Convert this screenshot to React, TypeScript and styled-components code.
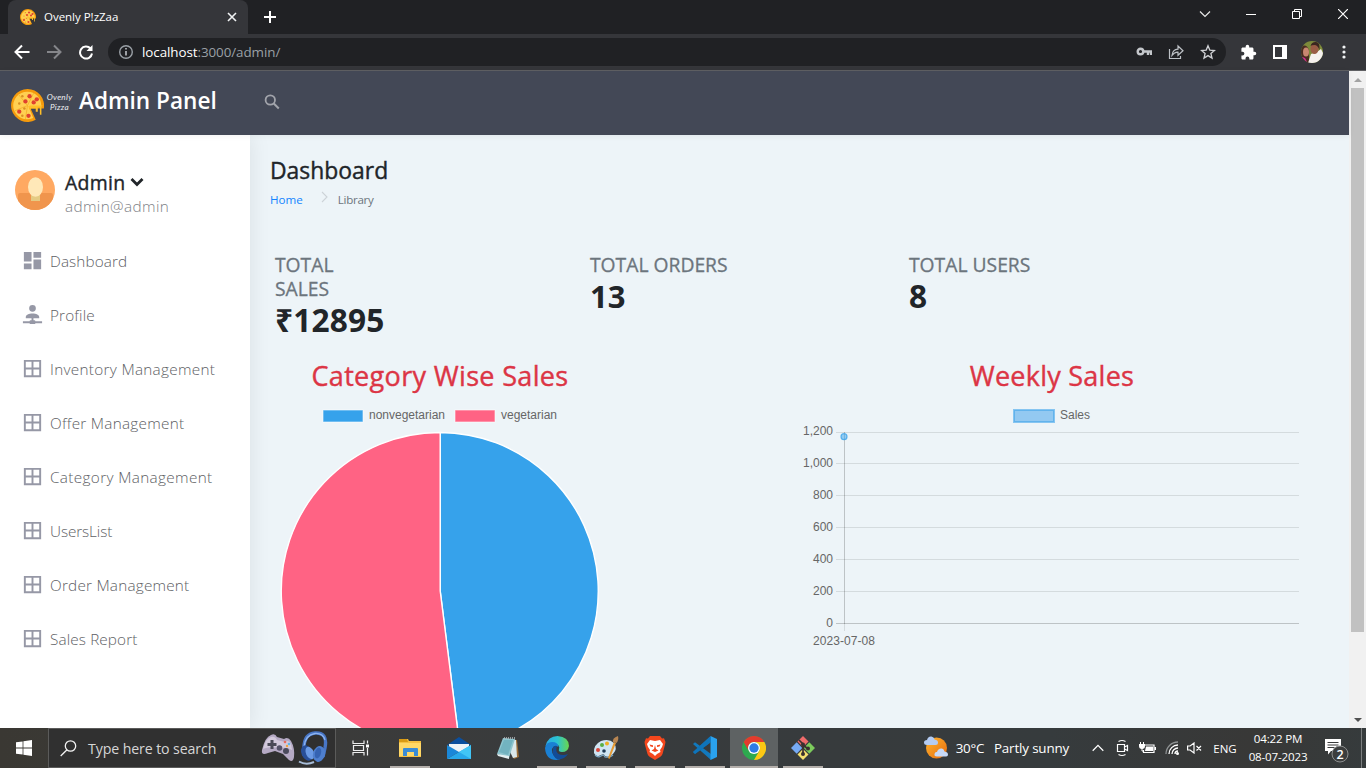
import React from 'react';
import styled, { createGlobalStyle, css } from 'styled-components';

const ui = `"Open Sans", "Noto Sans", sans-serif`;

const Global = createGlobalStyle`
  * { box-sizing: border-box; }
  body { margin: 0; overflow: hidden; font-family: ${ui}; }
  svg { display: block; flex: none; }
`;

const Screen = styled.div`
  width: 1366px;
  height: 768px;
  display: flex;
  flex-direction: column;
  overflow: hidden;
`;

/* text with explicit metrics; $bolden thickens the regular cut to a medium one */
const Text = styled.span<{
  $size: number; $weight?: number; $track?: number; $color?: string; $line?: number; $bolden?: number;
}>`
  font-size: ${p => p.$size}px;
  font-weight: ${p => p.$weight ?? 400};
  letter-spacing: ${p => p.$track ?? 0}px;
  color: ${p => p.$color ?? '#fff'};
  line-height: ${p => (p.$line ? `${p.$line}px` : 'normal')};
  -webkit-text-stroke: ${p => p.$bolden ?? 0}px currentColor;
  white-space: nowrap;
`;

/* ---------- browser ---------- */
const TabStrip = styled.div`
  height: 34px;
  flex: none;
  background: #202124;
  display: flex;
  padding-left: 8px;
`;
const Tab = styled.div`
  width: 240px;
  height: 34px;
  background: #35363a;
  border-radius: 8px 8px 0 0;
  display: flex;
  align-items: center;
  padding: 0 10px 0 12px;
  gap: 8px;
`;
const TabTitle = styled(Text)`
  flex: 1;
  margin-top: -1px;
`;
const NewTab = styled.div`
  width: 44px;
  display: flex;
  align-items: center;
  justify-content: center;
`;
const WindowButtons = styled.div`
  margin-left: auto;
  display: flex;
  height: 28px;
`;
const WindowButton = styled.div`
  width: 46px;
  display: flex;
  align-items: center;
  justify-content: center;
`;
const Toolbar = styled.div`
  height: 37px;
  flex: none;
  background: #35363a;
  border-bottom: 1px solid #5f6063;
  display: flex;
  align-items: center;
  padding-left: 10px;
`;
const NavButton = styled.div`
  width: 32px;
  display: flex;
  justify-content: center;
`;
const Address = styled.div`
  margin-left: 2px;
  width: 1118px;
  height: 28px;
  border-radius: 14px;
  background: #202124;
  display: flex;
  align-items: center;
  padding-left: 10px;
  padding-right: 2px;
  gap: 8px;
`;
const AddressText = styled.div`
  flex: 1;
  display: flex;
`;
const AddressIcon = styled.div`
  width: 32px;
  margin-left: -8px;
  display: flex;
  justify-content: center;
`;
const ToolbarRight = styled.div`
  display: flex;
  margin-left: 6px;
  align-items: center;
`;

/* ---------- page ---------- */
const Viewport = styled.div`
  height: 657px;
  flex: none;
  display: flex;
`;
const Page = styled.div`
  width: 1349px;
  display: flex;
  flex-direction: column;
  background: #edf4f8;
`;
const Header = styled.header`
  height: 64px;
  flex: none;
  background: #434856;
  display: flex;
  align-items: center;
  padding-left: 11px;
  position: relative;
  z-index: 2;
  box-shadow: 0 1px 6px rgba(0, 0, 0, 0.06);
`;
const Brand = styled.div`
  display: flex;
  align-items: center;
  width: 252px;
`;
const BrandIcon = styled.div`
  padding-top: 5px;
`;
const BrandTitle = styled(Text)`
  margin: -5px 0 0 4px;
`;
const Wordmark = styled.div`
  width: 31px;
  margin-top: -3px;
  display: flex;
  flex-direction: column;
  align-items: center;
  font: italic 400 8.2px/10px Lato, "Open Sans", sans-serif;
  letter-spacing: 0.3px;
  color: #eceef1;
`;
const SearchIcon = styled.div`
  margin-top: -2px;
`;
const Body = styled.div`
  flex: 1;
  min-height: 0;
  display: flex;
`;
const Sidebar = styled.aside`
  width: 250px;
  background: #fff;
  box-shadow: 1px 0 20px rgba(0, 0, 0, 0.08);
  padding-top: 35px;
`;
const User = styled.div`
  display: flex;
  padding-left: 15px;
  gap: 10px;
  height: 63px;
`;
const UserInfo = styled.div`
  display: flex;
  flex-direction: column;
`;
const UserName = styled.div`
  display: flex;
  align-items: center;
  gap: 5px;
  height: 24px;
`;
const MenuItem = styled.div`
  height: 54px;
  display: flex;
  align-items: center;
  padding-left: 21px;
  gap: 6px;
`;
const MenuText = styled(Text)`
  padding-top: 1px;
`;
const Main = styled.main`
  flex: 1;
  padding: 21px 0 0 20px;
  overflow: hidden;
  display: flex;
  flex-direction: column;
  & > * { flex: none; }
`;
const Title = styled(Text)`
  height: 30px;
`;
const Breadcrumb = styled.div`
  display: flex;
  height: 26px;
  align-items: center;
`;
const Stats = styled.div`
  display: grid;
  grid-template-columns: 315px 319px 1fr;
  margin: 41px 0 0 5px;
  height: 104px;
`;
const Stat = styled.div<{ $narrow?: boolean }>`
  width: ${p => (p.$narrow ? '100px' : 'auto')};
`;
const StatLabel = styled.div`
  font-size: 19.3px;
  line-height: 24px;
  -webkit-text-stroke: 0.3px currentColor;
  color: #6c757d;
`;
const Charts = styled.div`
  display: grid;
  grid-template-columns: 340px 514px;
  column-gap: 185px;
`;
const ChartCard = styled.section`
  display: flex;
  flex-direction: column;
  align-items: center;
`;
const ChartTitle = styled(Text)`
  height: 45px;
`;

const ScrollBar = styled.div`
  width: 17px;
  background: #f1f1f1;
  display: flex;
  flex-direction: column;
  align-items: center;
`;
const Thumb = styled.div`
  width: 13px;
  height: 544px;
  margin-bottom: auto;
  background: #c1c1c1;
`;
const ScrollArrow = styled.div`
  height: 17px;
  display: flex;
  align-items: center;
`;

/* ---------- taskbar ---------- */
const Taskbar = styled.footer`
  height: 40px;
  flex: none;
  display: flex;
  background: linear-gradient(90deg, #3a3833 0, #3b3b3a 330px, #383b3d 600px, #363b3d 1050px, #383837 1250px, #363b3c 1366px);
`;
const Start = styled.div`
  width: 48px;
  display: flex;
  align-items: center;
  justify-content: center;
`;
const SearchBox = styled.div`
  width: 288px;
  background: #303030;
  border: 1px solid #5b5b5a;
  display: flex;
  align-items: center;
  padding: 0 7px 0 11px;
`;
const SearchText = styled(Text)`
  margin-left: 11px;
  flex: 1;
`;
const SearchArt = styled.div`
  display: flex;
  align-items: center;
  gap: 3px;
`;
const AppSlot = styled.div<{ $run?: boolean; $active?: boolean }>`
  width: 49.15px;
  display: flex;
  flex-direction: column;
  align-items: center;
  justify-content: space-between;
  padding-top: 8px;
  ${p => p.$active && css`
    background: linear-gradient(90deg, transparent 0 1px, #5e6263 1px);
  `}
  &::after {
    content: '';
    height: 2px;
    width: ${p => (p.$active ? 48 : 40)}px;
    background: ${p => (p.$run || p.$active ? '#b4afab' : 'transparent')};
  }
`;
const Tray = styled.div`
  margin-left: auto;
  display: flex;
  align-items: center;
`;
const TrayCell = styled.div<{ $w: number }>`
  width: ${p => p.$w}px;
  display: flex;
  justify-content: center;
`;
const Clock = styled.div`
  width: 78px;
  margin-left: 3px;
  display: flex;
  flex-direction: column;
  align-items: center;
`;
const ShowDesktop = styled.div`
  width: 5px;
  height: 40px;
  border-left: 1px solid #7b7e7f;
`;

/* ---------- drawings ---------- */
const Pizza = ({ size }: { size: number }) => (
  <svg width={size} height={size} viewBox="0 0 32 32">
    <path d="M16 0A16 16 0 1 0 24 29.900L19 19L31.800 19A16 16 0 0 0 16 0Z" fill="#f59a0c" />
    <path d="M16 2.600A13.400 13.400 0 1 0 21.500 28L17 17H29.300A13.400 13.400 0 0 0 16 2.600Z" fill="#ffcf52" />
    <path d="M16 16L7 5M16 16L4 21M16 16L14 29M16 16L22 4" stroke="#f6b32d" strokeWidth=".9" />
    <path d="M17 17L19 21V19H24V22H26V18H28V25H29.500V17L31 16H18Z" fill="#ffbf28" />
    {[[11, 7], [18, 7], [25, 10], [8, 14], [14, 12], [8, 22], [13, 19], [17, 26], [22, 13], [11, 26]].map(([x, y], i) => (
      <circle key={i} cx={x} cy={y} r={i % 3 ? 2.1 : 1.2} fill={i % 3 ? '#e0412f' : '#d99025'} />
    ))}
  </svg>
);

const mdi: Record<string, string> = {
  dashboard: 'M13,3V9H21V3M13,21H21V11H13M3,21H11V15H3M3,13H11V3H3V13Z',
  profile:
    'M13,16V18H14A1,1 0 0,1 15,19H22V21H15A1,1 0 0,1 14,22H10A1,1 0 0,1 9,21H2V19H9A1,1 0 0,1 10,18H11V16H5V14.5C5,12.57 8.13,11 12,11C15.87,11 19,12.57 19,14.5V16H13M12,2A3.5,3.5 0 0,1 15.5,5.5A3.5,3.5 0 0,1 12,9A3.5,3.5 0 0,1 8.5,5.5A3.5,3.5 0 0,1 12,2Z',
  table: 'M19,11H13V5H19M19,19H13V13H19M11,11H5V5H11M11,19H5V13H11M3,21H21V3H3V21Z',
};
const menu: [string, string, number][] = [
  ['dashboard', 'Dashboard', 0.1],
  ['profile', 'Profile', 0.15],
  ['table', 'Inventory Management', 0.3],
  ['table', 'Offer Management', 0.27],
  ['table', 'Category Management', 0.35],
  ['table', 'UsersList', -0.1],
  ['table', 'Order Management', 0.22],
  ['table', 'Sales Report', 0.12],
];

const UserAvatar = () => (
  <svg width="40" height="40" viewBox="0 0 40 40">
    <defs><clipPath id="ua"><circle cx="20" cy="20" r="20" /></clipPath></defs>
    <g clipPath="url(#ua)">
      <rect width="40" height="40" fill="#ffa962" />
      <path d="M3 25q0-2 2-2h31q2 0 2 2v15H3Z" fill="#f0954d" />
      <rect x="16" y="22" width="9" height="9" fill="#e5cb83" />
      <ellipse cx="20.500" cy="17" rx="7.500" ry="9.800" fill="#ffe8b8" />
    </g>
  </svg>
);

const label = { fontFamily: '"Liberation Sans", Arial, sans-serif', fontSize: 12, fill: '#666' };

const PieChart = () => (
  <svg width="340" height="340" viewBox="270 402 340 340">
    <rect x="323" y="410" width="40" height="12" fill="#36a2eb" stroke="#fff" strokeOpacity=".6" />
    <text x="369" y="419" textLength="76" {...label}>nonvegetarian</text>
    <rect x="455" y="410" width="40" height="12" fill="#ff6384" stroke="#fff" strokeOpacity=".6" />
    <text x="501" y="419" textLength="56" {...label}>vegetarian</text>
    <g stroke="#fff" strokeWidth="1.400" strokeLinejoin="bevel">
      <path d="M440.200 591V432.500A158.500 158.500 0 0 1 460 748.200Z" fill="#36a2eb" />
      <path d="M440.200 591L460 748.200A158.500 158.500 0 1 1 440.200 432.500Z" fill="#ff6384" />
    </g>
  </svg>
);

const ticks: [string, number][] = [
  ['1,200', 432], ['1,000', 463], ['800', 495], ['600', 527], ['400', 559], ['200', 591], ['0', 623],
];
const LineChart = () => (
  <svg width="514" height="260" viewBox="795 402 514 260">
    <rect x="1013" y="409" width="42" height="14" fill="#86c5f1" />
    <rect x="1014.500" y="410.500" width="39" height="11" fill="#93c9f1" stroke="#62b3ec" />
    <text x="1060" y="419" textLength="30" {...label}>Sales</text>
    {ticks.map(([t, y]) => (
      <g key={t}>
        <rect x="836" y={y} width="463" height="1" fill="#000" opacity={t === '0' ? 0.2 : 0.1} />
        <text x="833" y={y + (t === '1,200' ? 3 : 4)} textAnchor="end" {...label}>{t}</text>
      </g>
    ))}
    <rect x="844" y="432" width="1" height="192" fill="#000" opacity=".2" />
    <rect x="844" y="624" width="1" height="7" fill="#000" opacity=".1" />
    <circle cx="844" cy="436.700" r="3" fill="#36a2eb" fillOpacity=".5" stroke="#36a2eb" strokeOpacity=".75" strokeWidth="1.200" />
    <text x="813" y="645" textLength="62" {...label}>2023-07-08</text>
  </svg>
);

const ProfilePhoto = () => (
  <svg width="22" height="22" viewBox="0 0 22 22">
    <defs><clipPath id="pp"><circle cx="11" cy="11" r="11" /></clipPath></defs>
    <g clipPath="url(#pp)">
      <rect width="22" height="22" fill="#7d8a3a" />
      <path d="M0 6q5-4 8 3v13H0Z" fill="#4a2c20" />
      <ellipse cx="5" cy="11" rx="3" ry="4.500" fill="#c98770" />
      <path d="M0 16q5-1 6 6H0Z" fill="#d42c90" />
      <path d="M7 22L10 13L16 11L20 8L22 12V22Z" fill="#f5f1ee" />
      <ellipse cx="13.500" cy="7.500" rx="4" ry="5.500" fill="#9a5c45" />
      <path d="M9.500 5q1-4 5-4t4 5v3q-2-5-5-5t-4 1" fill="#3a2620" />
    </g>
  </svg>
);

const Gamepad = () => (
  <svg width="34" height="30" viewBox="0 0 34 30">
    <path d="M1 17Q4 4 10 2Q14 0 16 4L23 6Q27 3 30 8Q34 15 33 24Q32 30 28 27L22 21L14 18L7 20Q0 23 1 17Z" fill="#b5a9c4" />
    <path d="M2 16Q5 5 10 4Q14 3 16 7L24 9Q28 6 30 11L31 17Q26 14 20 15L10 14Q4 15 2 16Z" fill="#d3c9dc" />
    <path d="M9.500 7h3v3h3v3h-3v3h-3v-3h-3v-3h3Z" fill="#4b4a58" />
    <circle cx="18.500" cy="15" r="2.800" fill="#56536a" /><circle cx="25" cy="18" r="3" fill="#4b4a5c" />
    <circle cx="24" cy="9" r="1.300" fill="#e86b5c" /><circle cx="28" cy="11" r="1.300" fill="#5db6e8" /><circle cx="26" cy="13" r="1.200" fill="#f0a53c" />
  </svg>
);
const Headphones = () => (
  <svg width="30" height="34" viewBox="0 0 30 34">
    <path d="M6 20Q5 3 17 2Q30 1 27 17L25 26" fill="none" stroke="#4876c6" strokeWidth="3.400" />
    <path d="M6 16Q7 4 17 2.500Q25 2 27 9" fill="none" stroke="#8db4f0" strokeWidth="1.300" />
    <ellipse cx="9" cy="22" rx="5.500" ry="8" transform="rotate(-25 9 22)" fill="#294f98" />
    <ellipse cx="12" cy="22" rx="4" ry="6.500" transform="rotate(-25 12 22)" fill="#6b9ae4" />
    <ellipse cx="21" cy="23" rx="6" ry="8" transform="rotate(15 21 23)" fill="#4e7fce" />
    <ellipse cx="20" cy="22" rx="3" ry="5.500" transform="rotate(15 20 22)" fill="#3563b2" />
    <path d="M16 31Q8 34.500 1 30.500" fill="none" stroke="#a8bdd8" strokeWidth="2" />
  </svg>
);

const Explorer = () => (
  <svg width="24" height="24" viewBox="0 0 24 24">
    <path d="M1 3h9l1 2h12v16H1Z" fill="#f5bf41" /><path d="M1 3h8l1 3H1Z" fill="#d99a14" /><path d="M1 7h22v13H1Z" fill="#ffd766" />
    <path d="M5 20v-7q0-1 1-1h13q1 0 1 1v7h-4v-4h-7v4Z" fill="#3a8bd4" />
  </svg>
);
const Mail = () => (
  <svg width="24" height="24" viewBox="0 0 24 24">
    <path d="M0 9L12 1L24 9Z" fill="#0b4f9e" /><path d="M2 8h20v8H2Z" fill="#eef3f7" />
    <path d="M0 9L12 16L0 23Z" fill="#1a87d8" /><path d="M24 9L0 23H24Z" fill="#28a8ea" /><path d="M24 9L12 16L24 23Z" fill="#41c5f5" />
  </svg>
);
const Notepad = () => (
  <svg width="24" height="24" viewBox="0 0 24 24">
    <path d="M8 3L21 4L23 21L18 23Z" fill="#9a6c36" /><path d="M8 3L20 4L21 21L17 22Z" fill="#dbe8ea" />
    <path d="M7 2L19 3L13 22L1 18Z" fill="#8ec5cf" /><path d="M8 4L17 4L12 19L3 16Z" fill="#5fa7b5" opacity=".6" /><path d="M1 18L13 20V23L2 20Z" fill="#e4f0f2" />
    <path d="M8 2h11" stroke="#b5b9bc" strokeWidth="1.500" strokeDasharray="1 1" />
  </svg>
);
const Edge = () => (
  <svg width="24" height="24" viewBox="0 0 24 24">
    <defs>
      <linearGradient id="e1" x1="0" x2="1"><stop offset="0" stopColor="#2aa9e6" /><stop offset=".5" stopColor="#2bc3d2" /><stop offset="1" stopColor="#6bd64b" /></linearGradient>
    </defs>
    <path d="M.5 10Q3 0 12.500 0Q24 1 24 10Q23 16 17 16Q13 16 14 13Q15 10 12 8.500Q6 5 .5 10Z" fill="url(#e1)" />
    <path d="M0 12Q1 6 7 6Q13 6 13.500 11Q9 8 7 13Q6 20 15 23.600Q1 26 0 12Z" fill="#1a80d4" />
    <path d="M8 12Q6 20 13 23.700Q20 23 23 18Q18 20 13.500 18Q10 15 12 10Q9 9 8 12Z" fill="#124c96" />
  </svg>
);
const Paint = () => (
  <svg width="26" height="24" viewBox="0 0 26 24">
    <path d="M1 17Q0 9 8 5Q16 2 21 7Q25 13 20 18Q16 22 12 20Q11 17 8 19Q3 22 1 17Z" fill="#cfe4f2" />
    <path d="M2 19Q5 22 8 20Q11 18 12 21Q17 22 20 19" fill="none" stroke="#7fa9c6" strokeWidth="1.200" />
    <circle cx="5" cy="14" r="2" fill="#d8453b" /><circle cx="9" cy="9" r="2" fill="#58ae45" /><circle cx="14" cy="7.500" r="2" fill="#f0ae22" /><circle cx="11" cy="15" r="1.800" fill="#1f3a55" />
    <path d="M15 22L21 6L23 7L16.500 23Z" fill="#e59a35" /><path d="M20 6Q19 2 25 0Q26 4 23.500 7Z" fill="#b78552" />
  </svg>
);
const Brave = () => (
  <svg width="22" height="24" viewBox="0 0 22 24">
    <path d="M6 0h10l2 2.500 2-.3L21.500 6l-.6 3L18.500 18q-.8 2-2.500 3L11 24 6 21q-1.800-1-2.500-3L1 9 .5 6 2 2.200l2 .3Z" fill="#f4471d" />
    <path d="M6 4l5 1 5-1 3 4-1 3-2 3 .5 2L13 18l-2 2-2-2-3.500-2 .5-2-2-3-1-3Z" fill="#fff" />
    <path d="M5.500 8.500l3.500.7v1.800L6.500 10.500ZM16.500 8.500L13 9.200v1.800l2.500-.5ZM11 9l1 4 2.500 1.500-3.500 1.500-3.500-1.500L10 13Z" fill="#f4471d" />
  </svg>
);
const VsCode = () => (
  <svg width="24" height="24" viewBox="0 0 24 24">
    <path d="M0 8L2 6.300L18 18V24Z" fill="#1279bd" /><path d="M0 16L2 18L18 6V0Z" fill="#0a69ab" />
    <path d="M17.500 0L24 3V21L17.500 24Z" fill="#2aa2ee" /><path d="M0 16L17.500 0V6.500L2 18Z" fill="#0f74ba" />
  </svg>
);
const Chrome = () => (
  <svg width="24" height="24" viewBox="0 0 24 24">
    <circle cx="12" cy="12" r="12" fill="#2da94f" />
    <path d="M1.600 6A12 12 0 0 1 22.400 6H12A6 6 0 0 0 6.800 15Z" fill="#e33b2e" />
    <path d="M22.400 6A12 12 0 0 1 12 24L17.200 15A6 6 0 0 0 12 6Z" fill="#fdc714" />
    <circle cx="12" cy="12" r="6" fill="#fff" /><circle cx="12" cy="12" r="4.700" fill="#2c7be5" />
  </svg>
);
const Git = () => (
  <svg width="24" height="24" viewBox="0 0 24 24">
    <path d="M12 0L17.500 5.500L12 11L6.500 5.500Z" fill="#ef6b6b" /><path d="M5.700 6.300L11.200 12L5.700 17.700L0 12Z" fill="#76aaf5" />
    <path d="M18.300 6.300L24 12L18.300 17.700L12.800 12Z" fill="#7ccb5c" /><path d="M12 13L17.500 18.500L12 24L6.500 18.500Z" fill="#f5df6f" />
    <path d="M8 4L12 8V18M12 9L17 13" stroke="#3a3030" strokeWidth="1.700" fill="none" />
    <circle cx="12" cy="8.500" r="2" fill="#3a3030" /><circle cx="12" cy="18" r="2" fill="#3a3030" /><circle cx="17" cy="12.500" r="2" fill="#3a3030" />
  </svg>
);
const TaskView = () => (
  <svg width="18" height="24" viewBox="0 0 18 24" fill="none" stroke="#eee" strokeWidth="1.200">
    <path d="M1 4.500v3h11v-3M1 19.500v-3h11v3M1.500 9.500h10v5h-10ZM15.500 4.500v3M15.500 12v7.500" /><path d="M14 8.500h3v3h-3Z" fill="#fff" stroke="none" />
  </svg>
);
const Weather = () => (
  <svg width="24" height="24" viewBox="0 0 24 24">
    <defs><linearGradient id="sun" x2="1" y2="1"><stop stopColor="#ffb52f" /><stop offset="1" stopColor="#e66b0d" /></linearGradient></defs>
    <circle cx="12.500" cy="12" r="10.500" fill="url(#sun)" />
    <path d="M3 9Q0 9 0 6.500T3 4Q4 0 7.500.5Q10 1 10.500 3.500Q14 4 14 6.500T11.500 9Z" fill="#b4ccf3" />
    <path d="M13 20.500Q10 20.500 10.500 18T13 16Q14 12 18 12.500Q20 13 20.500 15.500Q24 16 24 18.500T21.500 20.500Z" fill="#c7d9f7" />
  </svg>
);

const s = (stroke: string, w = 1) => ({ fill: 'none', stroke, strokeWidth: w });

export default function App() {
  return (
    <>
      <Global />
      <Screen>
        <TabStrip>
          <Tab>
            <Pizza size={16} />
            <TabTitle $size={11.5} $track={-0.02}>Ovenly P!zZaa</TabTitle>
            <svg width="12" height="12" viewBox="0 0 12 12"><path d="M2 2l8 8M10 2l-8 8" {...s('#f1f3f4', 1.6)} /></svg>
          </Tab>
          <NewTab><svg width="14" height="14" viewBox="0 0 14 14"><path d="M7 1v12M1 7h12" {...s('#fff', 2)} /></svg></NewTab>
          <WindowButtons>
            <WindowButton><svg width="12" height="12" viewBox="0 0 12 12"><path d="M1 3.500l5 5 5-5" {...s('#e8e8e8', 1.2)} /></svg></WindowButton>
            <WindowButton><svg width="10" height="10" viewBox="0 0 10 10"><path d="M0 5.500h10" {...s('#fff')} /></svg></WindowButton>
            <WindowButton><svg width="10" height="10" viewBox="0 0 10 10"><path d="M.5 2.500h7v7h-7ZM2.500 2.500v-2h7v7h-2" {...s('#fff')} /></svg></WindowButton>
            <WindowButton><svg width="10" height="10" viewBox="0 0 10 10"><path d="M0 0l10 10M10 0L0 10" {...s('#fff', 1.2)} /></svg></WindowButton>
          </WindowButtons>
        </TabStrip>
        <Toolbar>
          <NavButton><svg width="32" height="16" viewBox="4 0 32 16"><path d="M23.500 8H10M16 1.500L9.500 8l6.500 6.500" {...s('#fff', 2)} /></svg></NavButton>
          <NavButton><svg width="32" height="16" viewBox="4 0 32 16"><path d="M9 8h13.500M16 1.500L22.500 8L16 14.500" {...s('#85868a', 2)} /></svg></NavButton>
          <NavButton><svg width="32" height="16" viewBox="4 0 32 16"><path d="M20.500 4.500A6 6 0 1 0 22 9.500" {...s('#fff', 2)} /><path d="M22.500 1v6h-6Z" fill="#fff" /></svg></NavButton>
          <Address>
            <svg width="16" height="16" viewBox="0 0 16 16"><circle cx="8" cy="8" r="6.300" {...s('#9aa0a6', 1.4)} /><path d="M8 7v4.500M8 4v1.600" {...s('#bdc1c6', 1.6)} /></svg>
            <AddressText>
              <Text $size={13.4} $track={-0.07}>localhost</Text>
              <Text $size={13.4} $track={-0.07} $color="#9aa0a6">:3000/admin/</Text>
            </AddressText>
            <AddressIcon><svg width="16" height="16" viewBox="0 0 16 16"><circle cx="4.500" cy="7.500" r="2.800" {...s('#c4c7cb', 2.4)} /><path d="M8 7.500h7v3.500M12 8v3" {...s('#c4c7cb', 2.4)} /></svg></AddressIcon>
            <AddressIcon><svg width="16" height="16" viewBox="0 0 16 16"><path d="M1.500 5v9.500h11V12" {...s('#bdc1c6', 1.2)} /><path d="M4 11.500Q4.500 5.500 10 5.200V2l5 4.700-5 4.600V8.200Q6.500 8 4 11.500Z" {...s('#bdc1c6', 1.2)} /></svg></AddressIcon>
            <AddressIcon><svg width="16" height="16" viewBox="0 0 16 16"><path d="M8 1.800l1.800 4.300 4.700.4-3.600 3 1.100 4.600L8 11.600l-4 2.500 1.100-4.600-3.600-3 4.700-.4Z" {...s('#d0d2d5', 1.3)} /></svg></AddressIcon>
          </Address>
          <ToolbarRight>
            <NavButton><svg width="17" height="17" viewBox="0 0 24 24"><path d="M20.500 11H19V7c0-1.100-.9-2-2-2h-4V3.500a2.500 2.500 0 0 0-5 0V5H4c-1.100 0-2 .9-2 2v3.800h1.500a2.700 2.700 0 0 1 0 5.400H2V20c0 1.100.9 2 2 2h3.800v-1.500a2.700 2.700 0 0 1 5.400 0V22H17c1.100 0 2-.9 2-2v-4h1.500a2.500 2.500 0 0 0 0-5Z" fill="#fff" /></svg></NavButton>
            <NavButton><svg width="14" height="14" viewBox="0 0 14 14"><path d="M0 0h14v14H0ZM2 2v10h7V2Z" fill="#fff" fillRule="evenodd" /></svg></NavButton>
            <NavButton><ProfilePhoto /></NavButton>
            <NavButton><svg width="4" height="14" viewBox="0 0 4 14" fill="#f1f3f4"><circle cx="2" cy="2" r="1.600" /><circle cx="2" cy="7" r="1.600" /><circle cx="2" cy="12" r="1.600" /></svg></NavButton>
          </ToolbarRight>
        </Toolbar>

        <Viewport>
          <Page>
            <Header>
              <Brand>
                <BrandIcon><Pizza size={33} /></BrandIcon>
                <Wordmark><span>Ovenly</span><span>Pizza</span></Wordmark>
                <BrandTitle $size={22.6} $weight={600}>Admin Panel</BrandTitle>
              </Brand>
              <SearchIcon>
                <svg width="18" height="18" viewBox="0 0 18 18"><circle cx="7.300" cy="7" r="4.700" {...s('#a2a4ab', 1.8)} /><path d="M10.800 10.500l5 5" {...s('#a2a4ab', 2)} /></svg>
              </SearchIcon>
            </Header>
            <Body>
              <Sidebar>
                <User>
                  <UserAvatar />
                  <UserInfo>
                    <UserName>
                      <Text $size={19.4} $track={0.3} $bolden={0.4} $color="#212529">Admin</Text>
                      <svg width="14" height="10" viewBox="0 0 14 10"><path d="M1.500 2l5.500 5.500L12.500 2" {...s('#212529', 2.8)} /></svg>
                    </UserName>
                    <Text $size={15.3} $weight={300} $track={0.38} $color="#808286" $line={24}>admin@admin</Text>
                  </UserInfo>
                </User>
                {menu.map(([icon, text, track]) => (
                  <MenuItem key={text}>
                    <svg width="23" height="23" viewBox="0 0 24 24"><path d={mdi[icon]} fill="#9698a6" /></svg>
                    <MenuText $size={15.3} $weight={300} $track={track} $color="#606165">{text}</MenuText>
                  </MenuItem>
                ))}
              </Sidebar>
              <Main>
                <Title $size={22.9} $bolden={0.4} $color="#212529" $line={30}>Dashboard</Title>
                <Breadcrumb>
                  <Text $size={11.6} $color="#1384ff">Home</Text>
                  <svg width="35" height="16" viewBox="0 0 35 16"><path d="M19 1l5 5-5 5" {...s('#cdd3d8', 1.1)} /></svg>
                  <Text $size={11.6} $track={-0.3} $color="#6c757d">Library</Text>
                </Breadcrumb>
                <Stats>
                  <Stat $narrow>
                    <StatLabel>TOTAL SALES</StatLabel>
                    <Text $size={31.6} $weight={700} $track={0.2} $color="#212529" $line={38}>₹12895</Text>
                  </Stat>
                  <Stat>
                    <StatLabel>TOTAL ORDERS</StatLabel>
                    <Text $size={31} $weight={700} $color="#212529" $line={38}>13</Text>
                  </Stat>
                  <Stat>
                    <StatLabel>TOTAL USERS</StatLabel>
                    <Text $size={31.6} $weight={700} $color="#212529" $line={38}>8</Text>
                  </Stat>
                </Stats>
                <Charts>
                  <ChartCard>
                    <ChartTitle $size={27} $track={0.33} $bolden={0.4} $color="#dc3545" $line={38}>Category Wise Sales</ChartTitle>
                    <PieChart />
                  </ChartCard>
                  <ChartCard>
                    <ChartTitle $size={27} $track={0.25} $bolden={0.4} $color="#dc3545" $line={38}>Weekly Sales</ChartTitle>
                    <LineChart />
                  </ChartCard>
                </Charts>
              </Main>
            </Body>
          </Page>
          <ScrollBar>
            <ScrollArrow><svg width="8" height="4" viewBox="0 0 8 4"><path d="M4 0l4 4H0Z" fill="#a3a3a3" /></svg></ScrollArrow>
            <Thumb />
            <ScrollArrow><svg width="8" height="4" viewBox="0 0 8 4"><path d="M0 0h8L4 4Z" fill="#505050" /></svg></ScrollArrow>
          </ScrollBar>
        </Viewport>

        <Taskbar>
          <Start><svg width="16" height="16" viewBox="0 0 16 16"><path d="M0 2.300L6.600 1.400V7.600H0ZM7.400 1.300L16 0V7.600H7.400ZM0 8.400H6.600V14.600L0 13.700ZM7.400 8.400H16V16L7.400 14.700Z" fill="#fff" /></svg></Start>
          <SearchBox>
            <svg width="17" height="17" viewBox="0 0 17 17"><circle cx="10.500" cy="6" r="5.200" {...s('#f3f3f3', 1.3)} /><path d="M7 9.800L.7 16" {...s('#f3f3f3', 1.3)} /></svg>
            <SearchText $size={14.2} $track={-0.12} $color="#d6d6d6">Type here to search</SearchText>
            <SearchArt>
              <Gamepad />
              <Headphones />
            </SearchArt>
          </SearchBox>
          <AppSlot><TaskView /></AppSlot>
          <AppSlot $run><Explorer /></AppSlot>
          <AppSlot><Mail /></AppSlot>
          <AppSlot><Notepad /></AppSlot>
          <AppSlot $run><Edge /></AppSlot>
          <AppSlot $run><Paint /></AppSlot>
          <AppSlot $run><Brave /></AppSlot>
          <AppSlot $run><VsCode /></AppSlot>
          <AppSlot $active><Chrome /></AppSlot>
          <AppSlot $run><Git /></AppSlot>
          <Tray>
            <TrayCell $w={37}><Weather /></TrayCell>
            <TrayCell $w={32}><Text $size={13.4} $track={-0.2}>30°C</Text></TrayCell>
            <TrayCell $w={91}><Text $size={13.4} $track={-0.15}>Partly sunny</Text></TrayCell>
            <TrayCell $w={42}><svg width="12" height="8" viewBox="0 0 12 8"><path d="M.7 6.700L6 1.400l5.300 5.300" {...s('#fff', 1.3)} /></svg></TrayCell>
            <TrayCell $w={6}><svg width="14" height="18" viewBox="0 0 14 18"><path d="M2.500 5.500h7v7h-7ZM9.500 8l3-1.500v5L9.500 10M3.500 2.500q3.500-2 7 0M3.500 15.500q3.500 2 7 0" {...s('#fff', 1.2)} /></svg></TrayCell>
            <TrayCell $w={44}><svg width="17" height="12" viewBox="0 0 17 12"><path d="M6 3h9v7.500H4.500V8" {...s('#fff', 1.2)} /><path d="M7 4.500h7V9H6ZM15.500 5H17v3h-1.500ZM0 2h6v2q0 3-3 3T0 4Z" fill="#fff" /><path d="M1.500 0v2M4.500 0v2M3 6v3h2" {...s('#fff')} /></svg></TrayCell>
            <TrayCell $w={5}><svg width="14" height="14" viewBox="0 0 14 14"><path d="M1 13A12 12 0 0 1 13 1" {...s('#8f9394', 1.3)} /><path d="M4 13A9 9 0 0 1 13 4M7 13A6 6 0 0 1 13 7M10 13A3 3 0 0 1 13 10" {...s('#fff', 1.3)} /><circle cx="12.500" cy="12.500" r="1.500" fill="#fff" /></svg></TrayCell>
            <TrayCell $w={40}><svg width="15" height="12" viewBox="0 0 15 12"><path d="M.6 4v4h2.500L7 11V1L3.100 4ZM9.500 4l4.500 4.500M14 4L9.500 8.500" {...s('#fff', 1.2)} /></svg></TrayCell>
            <TrayCell $w={22}><Text $size={11.5}>ENG</Text></TrayCell>
            <Clock>
              <Text $size={11.6} $track={-0.2} $line={18}>04:22 PM</Text>
              <Text $size={11.6} $track={-0.18} $line={18}>08-07-2023</Text>
            </Clock>
            <svg width="44" height="30" viewBox="0 0 44 30">
              <path d="M8 6h16v12H14l-3 3.500V18H8Z" fill="#fff" /><path d="M10.500 9.500h11M10.500 12h11M10.500 14.500h7" {...s('#3a3b3b')} />
              <circle cx="23" cy="21" r="8" fill="#3c3e3e" stroke="#8d8f8f" />
              <text x="23" y="25.500" textAnchor="middle" fontSize="12.500" fontFamily="Open Sans" fill="#fff" fontWeight="600">2</text>
            </svg>
            <ShowDesktop />
          </Tray>
        </Taskbar>
      </Screen>
    </>
  );
}
